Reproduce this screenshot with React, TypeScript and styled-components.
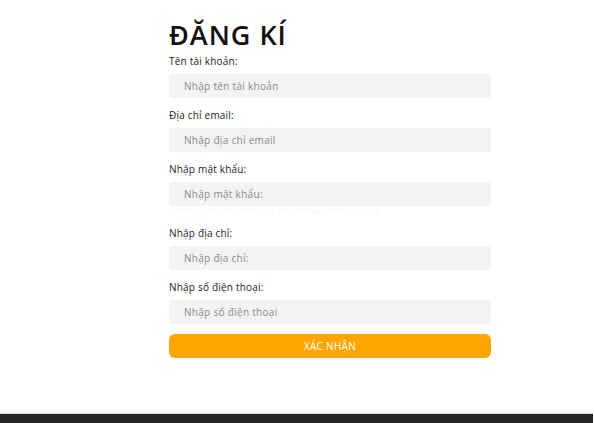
import React from "react";
import styled, { createGlobalStyle } from "styled-components";

const Global = createGlobalStyle`
  html, body { margin: 0; padding: 0; background: #fff; }
  body { font-family: "Open Sans", "Noto Sans", sans-serif; color: #222; }
  * { box-sizing: border-box; }
`;

const Page = styled.div`
  width: 594px;
  height: 423px;
  display: flex;
  flex-direction: column;
  overflow: hidden;
`;

const Main = styled.main`
  flex: 1;
  display: flex;
  padding-left: 169px;
`;

const Form = styled.form`
  width: 322px;
  display: flex;
  flex-direction: column;
  padding-top: 18px;
`;

const Title = styled.h1`
  margin: 0 0 2px;
  font-family: "Open Sans", sans-serif;
  font-size: 27px;
  line-height: 34px;
  font-weight: 600;
  color: #111;
  letter-spacing: 1px;
`;

const Field = styled.div`
  display: flex;
  flex-direction: column;
  margin-bottom: 10px;
`;

const Label = styled.label`
  font-size: 10px;
  line-height: 14px;
  letter-spacing: 0.2px;
  color: #222;
  margin-bottom: 6px;
`;

const Input = styled.input`
  height: 24px;
  border: none;
  outline: none;
  border-radius: 3px;
  background: #f3f3f3;
  padding: 0 15px;
  font-family: inherit;
  font-size: 10px;
  letter-spacing: 0.3px;
  color: #333;
  &::placeholder { color: #8a8a8a; }
`;

const Hint = styled.div`
  height: 10px;
  font-size: 7px;
  line-height: 10px;
  color: #f8f8f8;
  padding-left: 2px;
`;

const Submit = styled.button`
  height: 24px;
  border: none;
  border-radius: 6px;
  background: #ffa500;
  color: #fff;
  font-family: inherit;
  font-size: 10px;
  letter-spacing: 0.3px;
  cursor: pointer;
`;

const Footer = styled.footer`
  height: 10px;
  border-top: 1px solid #d6d6d6;
  background: #252525;
  margin-right: 1px;
`;

const fields = [
  { label: "Tên tài khoản:", ph: "Nhập tên tài khoản" },
  { label: "Địa chỉ email:", ph: "Nhập địa chỉ email" },
  { label: "Nhập mật khẩu:", ph: "Nhập mật khẩu:", hint: true },
  { label: "Nhập địa chỉ:", ph: "Nhập địa chỉ:" },
  { label: "Nhập số điện thoại:", ph: "Nhập số điện thoại" },
];

export default function App() {
  return (
    <Page>
      <Global />
      <Main>
        <Form onSubmit={(e) => e.preventDefault()}>
          <Title>ĐĂNG KÍ</Title>
          {fields.map((f) => (
            <Field key={f.label}>
              <Label>{f.label}</Label>
              <Input placeholder={f.ph} type={f.hint ? "password" : "text"} />
              {f.hint && <Hint>Mật khẩu phải có ít nhất 8 ký tự, gồm chữ hoa, chữ thường và số</Hint>}
            </Field>
          ))}
          <Submit type="submit">XÁC NHẬN</Submit>
        </Form>
      </Main>
      <Footer />
    </Page>
  );
}
